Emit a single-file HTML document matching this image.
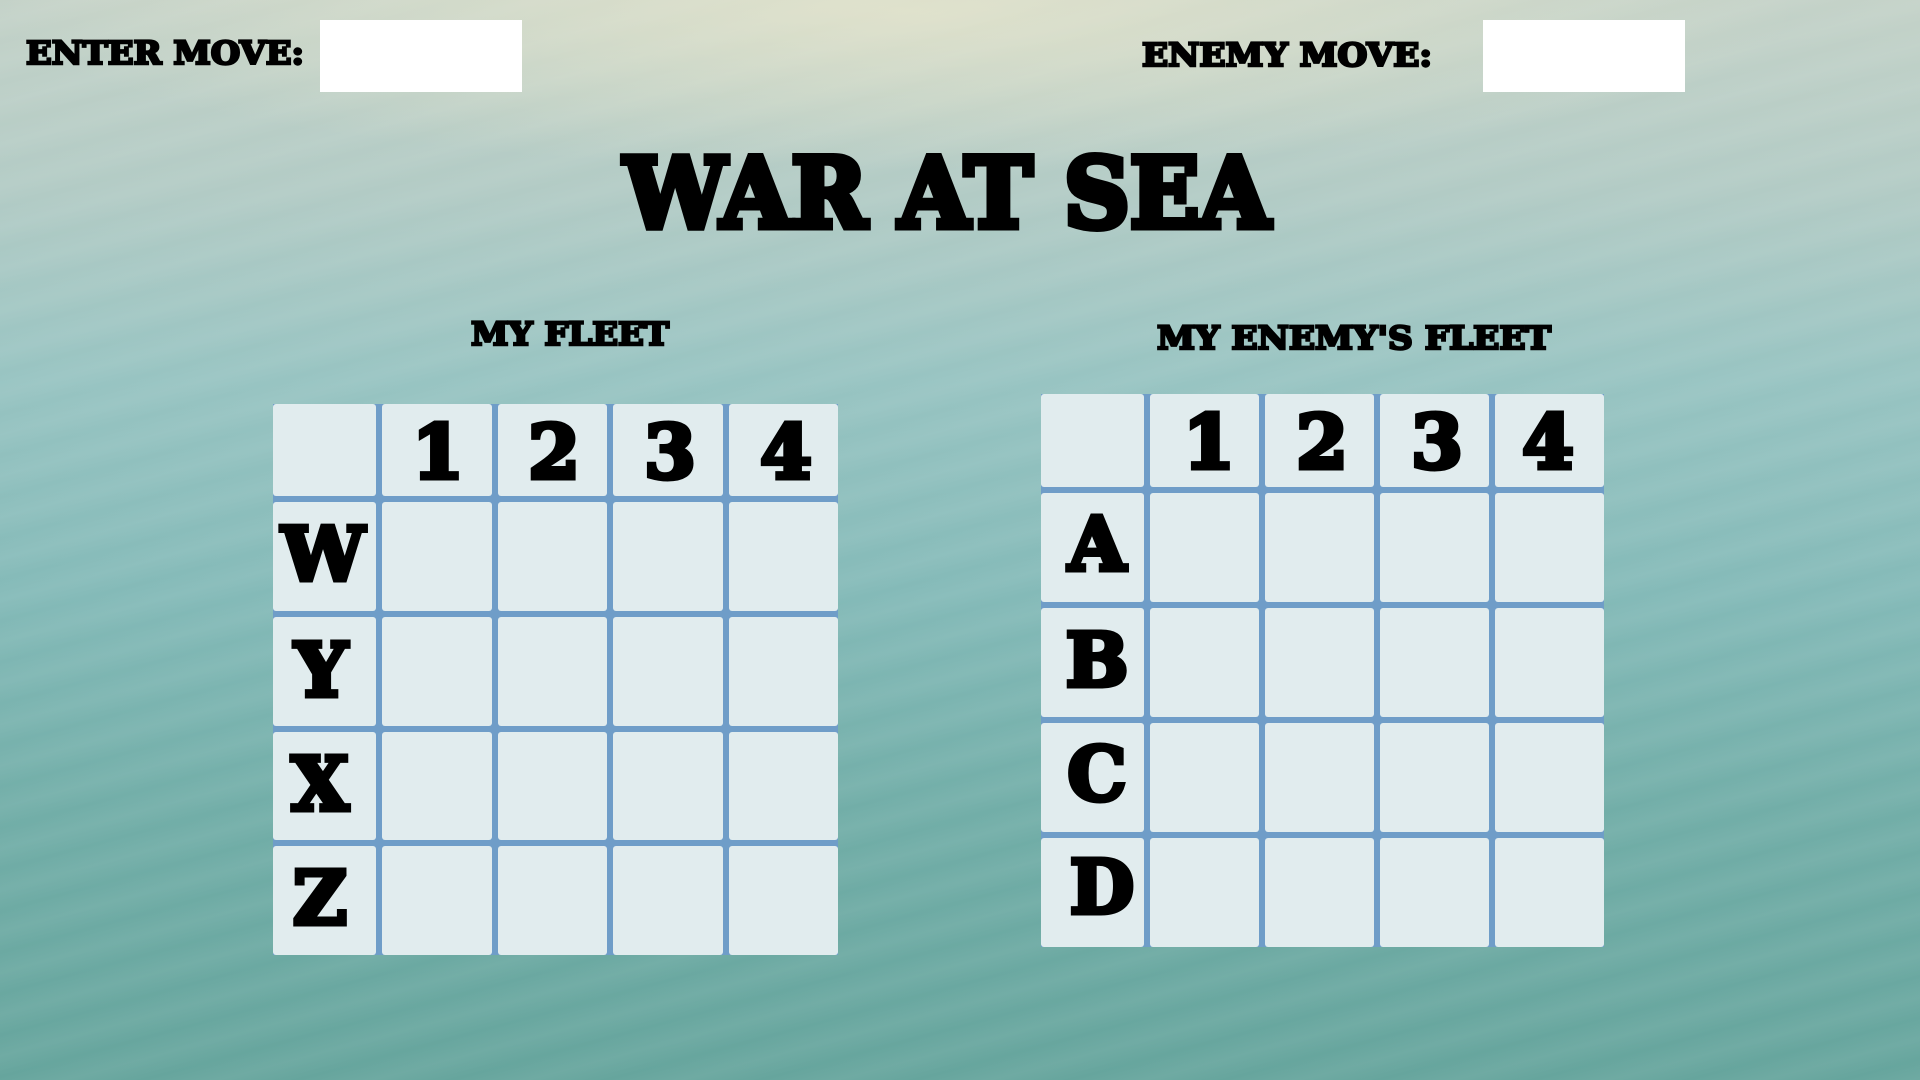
<!DOCTYPE html>
<html><head><meta charset="utf-8"><style>
html,body{margin:0;padding:0;width:1920px;height:1080px;overflow:hidden}
body{position:relative;background:
radial-gradient(ellipse 900px 160px at 900px 10px, rgba(235,232,205,.7), rgba(235,232,205,0)),
repeating-linear-gradient(165deg, rgba(255,255,255,0) 0px, rgba(255,255,255,.06) 20px, rgba(255,255,255,0) 40px),
linear-gradient(180deg,#c4d2c8 0%,#b2cbc5 18%,#98c4c2 35%,#84bab8 55%,#72aea8 75%,#66a59d 100%);}
svg.t{position:absolute;left:0;top:0;overflow:visible}
.inp{position:absolute;background:#fff;}
.grid{position:absolute;display:grid;gap:6px;background:#6f9dc8}
.grid div{background:#e1ecee;border-radius:3px}
text{font-family:"DejaVu Serif","Liberation Serif",serif;font-weight:bold;fill:#000;stroke:#000;stroke-linejoin:miter}
</style></head><body>
<div class="inp" style="left:320px;top:20px;width:202px;height:72px"></div>
<div class="inp" style="left:1483px;top:20px;width:202px;height:72px"></div>

<div class="grid" style="left:273px;top:404px;width:565px;height:551px;grid-template-columns:103px repeat(4,1fr);grid-template-rows:92px repeat(4,1fr)">
<div></div><div></div><div></div><div></div><div></div>
<div></div><div></div><div></div><div></div><div></div>
<div></div><div></div><div></div><div></div><div></div>
<div></div><div></div><div></div><div></div><div></div>
<div></div><div></div><div></div><div></div><div></div>
</div>
<div class="grid" style="left:1041px;top:394px;width:563px;height:553px;grid-template-columns:103px repeat(4,1fr);grid-template-rows:93px repeat(4,1fr)">
<div></div><div></div><div></div><div></div><div></div>
<div></div><div></div><div></div><div></div><div></div>
<div></div><div></div><div></div><div></div><div></div>
<div></div><div></div><div></div><div></div><div></div>
<div></div><div></div><div></div><div></div><div></div>
</div>

<svg class="t" width="1920" height="1080">
<text x="26" y="64" font-size="32" stroke-width="2.5" textLength="278" lengthAdjust="spacingAndGlyphs">ENTER MOVE:</text>
<text x="1142" y="66" font-size="32" stroke-width="2.5" textLength="290" lengthAdjust="spacingAndGlyphs">ENEMY MOVE:</text>
<text x="624" y="227" font-size="96" stroke-width="7" textLength="646" lengthAdjust="spacingAndGlyphs">WAR AT SEA</text>
<text x="471" y="345" font-size="32" stroke-width="2.5" textLength="198" lengthAdjust="spacingAndGlyphs">MY FLEET</text>
<text x="1157" y="349" font-size="32" stroke-width="2.5" textLength="394" lengthAdjust="spacingAndGlyphs">MY ENEMY'S FLEET</text>
<g font-size="74" stroke-width="5" text-anchor="middle">
<text x="438" y="478">1</text><text x="554" y="478">2</text><text x="670" y="478">3</text><text x="786" y="478">4</text>
<text x="323" y="580">W</text><text x="321" y="696">Y</text><text x="320" y="810">X</text><text x="320" y="924">Z</text>
<text x="1209" y="468">1</text><text x="1322" y="468">2</text><text x="1437" y="468">3</text><text x="1548" y="468">4</text>
<text x="1097" y="570">A</text><text x="1097" y="686">B</text><text x="1097" y="800">C</text><text x="1102" y="913">D</text>
</g>
</svg>
</body></html>
